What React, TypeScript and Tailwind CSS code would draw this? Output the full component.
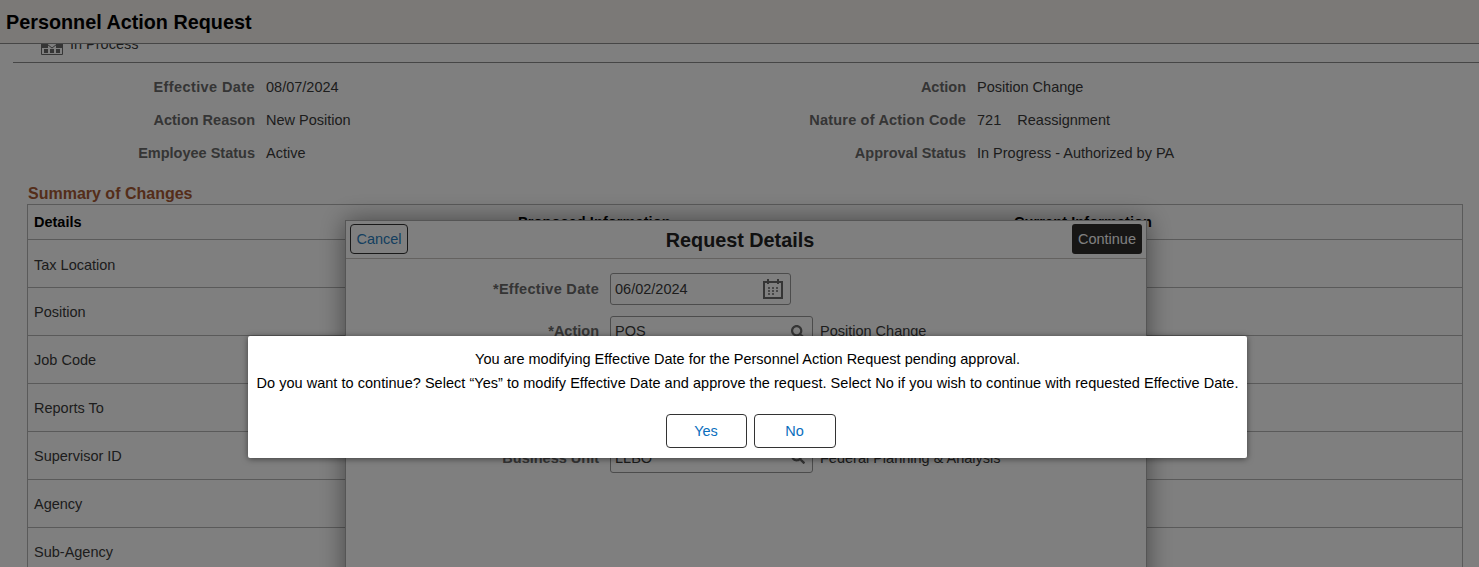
import { FaSearch } from "react-icons/fa";

const summaryRows = ["Position", "Job Code", "Reports To", "Supervisor ID", "Agency", "Sub-Agency"];

const leftFields = [
  { label: "Effective Date", value: "08/07/2024", spacing: "tracking-[0.4px]" },
  { label: "Action Reason", value: "New Position", spacing: "" },
  { label: "Employee Status", value: "Active", spacing: "" },
];

const rightFields = [
  { label: "Action", value: "Position Change", spacing: "" },
  { label: "Nature of Action Code", value: "721\u00a0\u00a0\u00a0\u00a0Reassignment", spacing: "tracking-[0.2px]" },
  { label: "Approval Status", value: "In Progress - Authorized by PA", spacing: "" },
];

const CalendarIcon = () => (
  <svg width="20" height="20" viewBox="0 0 20 20" fill="none" stroke="#6a6a6a" strokeWidth="2">
    <rect x="1" y="3" width="18" height="16" />
    <path d="M5 0v5M15 0v5" />
    <path d="M5 9h2M9 9h2M13 9h2M5 12h2M9 12h2M13 12h2M5 15h2M9 15h2" strokeWidth="1.6" />
  </svg>
);

const InProcessIcon = () => (
  <svg width="22" height="16" viewBox="0 0 22 16" fill="none">
    <path d="M.5 15.5V5.500H6.500L11 9l4.500-3.500H21.500V15.500z" stroke="#6a6a6a" />
    <path d="M0 5h7v4H0zM15 5h7v4h-7z" fill="#6a6a6a" />
    <path d="M3 10h4v4H3zM9 10h4v4H9zM15 10h4v4h-4z" fill="#6a6a6a" />
  </svg>
);

const FieldRow = ({ label, value, labelWidth, spacing }: { label: string; value: string; labelWidth: string; spacing: string }) => (
  <div className="flex h-[33px] items-center">
    <div className={`${labelWidth} text-right font-bold text-[#6a6a6a] ${spacing}`}>{label}</div>
    <div className="ml-[11px] text-[#3a3a3a]">{value}</div>
  </div>
);

const DialogField = ({
  label,
  value,
  desc,
  wide,
  shift = "",
  spacing = "",
}: {
  label: string;
  value: string;
  desc?: string;
  wide?: boolean;
  shift?: string;
  spacing?: string;
}) => (
  <div className="flex h-[32px] items-center">
    <div className={`w-[253px] text-right font-bold text-[#6a6a6a] ${shift} ${spacing}`}>{label}</div>
    <div className="ml-[11px] flex h-[32px] items-center justify-between rounded-[3px] border border-[#999] pl-1 pr-[7px] text-[#3a3a3a] data-[wide=true]:w-[203px] data-[wide=false]:w-[181px]" data-wide={wide ? "true" : "false"}>
      <span className={shift}>{value}</span>
      {wide ? <FaSearch size={14} color="#6a6a6a" /> : <CalendarIcon />}
    </div>
    {desc && <div className={`ml-[7px] text-[#3a3a3a] ${shift}`}>{desc}</div>}
  </div>
);

export default function App() {
  return (
    <div className="relative h-[567px] w-[1479px] overflow-hidden bg-white font-['Liberation_Sans',Arial,sans-serif] text-[14.5px]">
      <div className="relative z-10 flex h-[44px] items-center border-b border-[#8c8c8c] bg-[#f6f3ef] pl-[6px] pt-[2px]">
        <h1 className="text-[19.8px] font-bold text-black">Personnel Action Request</h1>
      </div>

      <div className="ml-[13px] h-[19px] overflow-hidden border-b border-[#8c8c8c]">
        <div className="ml-[28px] mt-[-10px] flex items-start gap-[7px] text-[#3a3a3a]">
          <span className="mt-[5px]">
            <InProcessIcon />
          </span>
          <span>In Process</span>
        </div>
      </div>

      <div className="mt-[8px] flex">
        <div className="w-[796px]">
          {leftFields.map((f) => (
            <FieldRow key={f.label} label={f.label} value={f.value} spacing={f.spacing} labelWidth="w-[255px]" />
          ))}
        </div>
        <div>
          {rightFields.map((f) => (
            <FieldRow key={f.label} label={f.label} value={f.value} spacing={f.spacing} labelWidth="w-[170px]" />
          ))}
        </div>
      </div>

      <div className="ml-[28px] mt-[15px] h-[18px] text-[16px] leading-[18px] font-bold text-[#a85a34]">Summary of Changes</div>

      <div className="ml-[27px] mt-[1px] w-[1436px] border border-[#b5b5b5]">
        <div className="grid h-[35px] grid-cols-[484px_496px_1fr] items-center border-b border-[#b5b5b5] pl-[6px] pt-[2px] font-bold text-black">
          <div>Details</div>
          <div className="tracking-[0.1px]">Proposed Information</div>
          <div className="tracking-[0.1px]">Current Information</div>
        </div>
        <div className="flex h-[48px] items-center border-b border-[#b5b5b5] pl-[6px] pt-[4px] text-[#3a3a3a]">Tax Location</div>
        {summaryRows.map((row) => (
          <div key={row} className="flex h-[48px] items-center border-b border-[#b5b5b5] pl-[6px] pt-[2px] text-[#3a3a3a]">
            {row}
          </div>
        ))}
      </div>

      {/* Request Details dialog, sits under the confirm */}
      <div className="absolute left-[345px] top-[220px] h-[400px] w-[802px] border border-[#aaa] bg-white shadow-[0_0_24px_rgba(0,0,0,0.45)]">
        <div className="flex h-[38px] items-start justify-between border-b border-[#c8c4c0] px-[4px] pt-[3px]">
          <button className="h-[30px] w-[58px] rounded-[4px] border border-[#333] pt-[1px] text-[#2a7fc0]">Cancel</button>
          <div className="mt-[2px] text-[19.8px] font-bold text-[#222]">Request Details</div>
          <button className="h-[30px] w-[70px] rounded-[3px] bg-[#2e2c2a] pt-[1px] text-white">Continue</button>
        </div>
        <div className="flex flex-col gap-[11px] pt-[14px]">
          <DialogField label="*Effective Date" value="06/02/2024" shift="pt-[2px]" spacing="tracking-[0.3px]" />
          <DialogField label="*Action" value="POS" desc="Position Change" wide />
        </div>
        <div className="mt-[93px]">
          <DialogField label="Business Unit" value="LLBO" desc="Federal Planning & Analysis" wide shift="pt-[4px]" />
        </div>
      </div>

      <div className="absolute inset-0 z-20 bg-black/50" />

      <div className="absolute left-[248px] top-[336px] z-30 flex h-[122px] w-[999px] flex-col items-center rounded-[2px] bg-white pt-[11px] text-black shadow-[0_1px_6px_rgba(0,0,0,0.5)]">
        <p className="leading-[24px]">You are modifying Effective Date for the Personnel Action Request pending approval.</p>
        <p className="leading-[24px] tracking-[0.03px]">
          Do you want to continue? Select “Yes” to modify Effective Date and approve the request. Select No if you wish to continue with requested Effective Date.
        </p>
        <div className="ml-[6px] mt-[19px] flex gap-[7px]">
          <button className="h-[34px] w-[81px] rounded-[4px] border border-[#333] pt-[1px] text-[#0a6ebd]">Yes</button>
          <button className="h-[34px] w-[82px] rounded-[4px] border border-[#333] pt-[1px] text-[#0a6ebd]">No</button>
        </div>
      </div>
    </div>
  );
}
